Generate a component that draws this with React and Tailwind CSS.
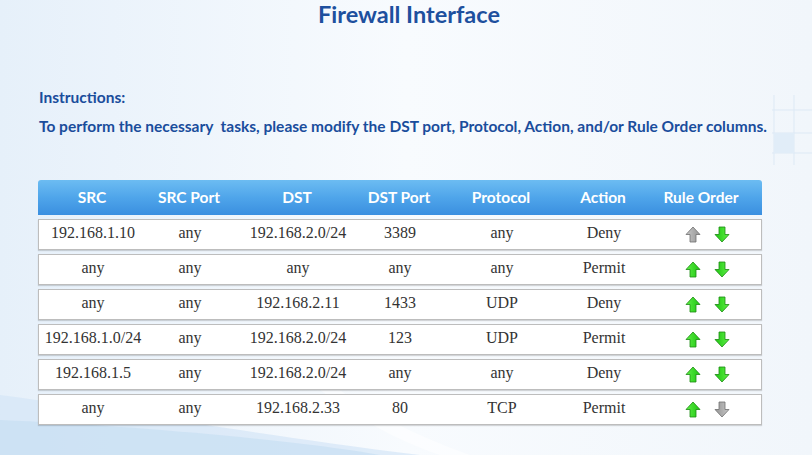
import React from 'react';

const rules = [
  { src: '192.168.1.10', srcPort: 'any', dst: '192.168.2.0/24', dstPort: '3389', protocol: 'any', action: 'Deny' },
  { src: 'any', srcPort: 'any', dst: 'any', dstPort: 'any', protocol: 'any', action: 'Permit' },
  { src: 'any', srcPort: 'any', dst: '192.168.2.11', dstPort: '1433', protocol: 'UDP', action: 'Deny' },
  { src: '192.168.1.0/24', srcPort: 'any', dst: '192.168.2.0/24', dstPort: '123', protocol: 'UDP', action: 'Permit' },
  { src: '192.168.1.5', srcPort: 'any', dst: '192.168.2.0/24', dstPort: 'any', protocol: 'any', action: 'Deny' },
  { src: 'any', srcPort: 'any', dst: '192.168.2.33', dstPort: '80', protocol: 'TCP', action: 'Permit' },
];

const headers = ['SRC', 'SRC Port', 'DST', 'DST Port', 'Protocol', 'Action', 'Rule Order'];

const cols = 'grid grid-cols-[108px_86px_130px_74px_130px_74px_122px]';

// block arrow, gray when it can't move further
const Arrow = ({ down, enabled }) => {
  const stroke = enabled ? '#1c8a12' : '#6f6f6f';
  const id = enabled ? 'ga' : 'gg';
  return (
    <svg width="16" height="17" viewBox="0 0 16 17" className={down ? 'rotate-180' : ''}>
      <defs>
        <linearGradient id={id} x1="0" y1="0" x2="1" y2="0">
          <stop offset="0" stopColor={enabled ? '#5ef046' : '#c6c6c6'} />
          <stop offset="1" stopColor={enabled ? '#1fc412' : '#959595'} />
        </linearGradient>
      </defs>
      <path
        d="M8 1 L15 8.5 L11 8.5 L11 16 L5 16 L5 8.5 L1 8.5 Z"
        fill={`url(#${id})`}
        stroke={stroke}
        strokeWidth="0.8"
        strokeLinejoin="round"
      />
    </svg>
  );
};

const App = () => {
  return (
    <div className="relative w-[812px] h-[455px] overflow-hidden bg-gradient-to-r from-[#e6f0fa] via-[#f8fbfe] to-[#f1f6fb]">
      {/* soft background decorations */}
      <svg className="absolute left-0 bottom-0" width="812" height="80" viewBox="0 0 812 80">
        <path d="M0 20 C 150 40, 260 60, 420 80 L0 80 Z" fill="#d4e6f6" opacity="0.7" />
        <path d="M0 45 C 120 50, 300 65, 380 80 L0 80 Z" fill="#c5ddf2" opacity="0.6" />
        <path d="M300 0 C 340 30, 380 60, 440 80 L470 80 C 400 55, 350 25, 320 0 Z" fill="#ffffff" opacity="0.5" />
      </svg>
      <svg className="absolute right-0 top-[95px]" width="40" height="70" viewBox="0 0 40 70">
        <g stroke="#dde9f5" strokeWidth="1" fill="none">
          <path d="M2 0 V70 M22 0 V70 M0 15 H40 M0 38 H40 M0 58 H40" />
        </g>
        <rect x="2" y="38" width="20" height="20" fill="#e1edf8" />
      </svg>

      <div className="relative flex flex-col font-['Lato',sans-serif]">
        <h1 className="text-center text-[23.5px] font-bold text-[#1e509e] leading-[28px] pl-[6px]">
          Firewall Interface
        </h1>

        <div className="pl-[39px] mt-[59px] text-[#1a4d9c] font-bold text-[15.5px]">
          <p className="leading-[20px]">Instructions:</p>
          <p className="leading-[20px] mt-[9px]">
            To perform the necessary&nbsp; tasks, please modify the DST port, Protocol, Action, and/or Rule Order columns.
          </p>
        </div>

        <div className="ml-[38px] mt-[44px] w-[724px] flex flex-col gap-[4px]">
          <div className={`${cols} h-[35px] items-center rounded-t-[3px] bg-gradient-to-b from-[#6cbcf2] via-[#4fa5ea] to-[#3a8fe0] text-white font-bold text-[15.5px]`}>
            {headers.map((h) => (
              <div key={h} className="text-center">{h}</div>
            ))}
          </div>
          {rules.map((r, i) => (
            <div
              key={i}
              className={`${cols} h-[31px] items-center bg-white border border-[#bdbdbd] shadow-[0_1px_1px_rgba(0,0,0,0.15)] text-[16px] text-[#333333] font-['Liberation_Serif',serif]`}
            >
              <div className="text-center pb-[3px]">{r.src}</div>
              <div className="text-center pb-[3px]">{r.srcPort}</div>
              <div className="text-center pb-[3px]">{r.dst}</div>
              <div className="text-center pb-[3px]">{r.dstPort}</div>
              <div className="text-center pb-[3px]">{r.protocol}</div>
              <div className="text-center pb-[3px]">{r.action}</div>
              <div className="flex items-center justify-center gap-[13px] pl-[10px]">
                <Arrow enabled={i !== 0} />
                <Arrow down enabled={i !== rules.length - 1} />
              </div>
            </div>
          ))}
        </div>
      </div>
    </div>
  );
};

export default App;
